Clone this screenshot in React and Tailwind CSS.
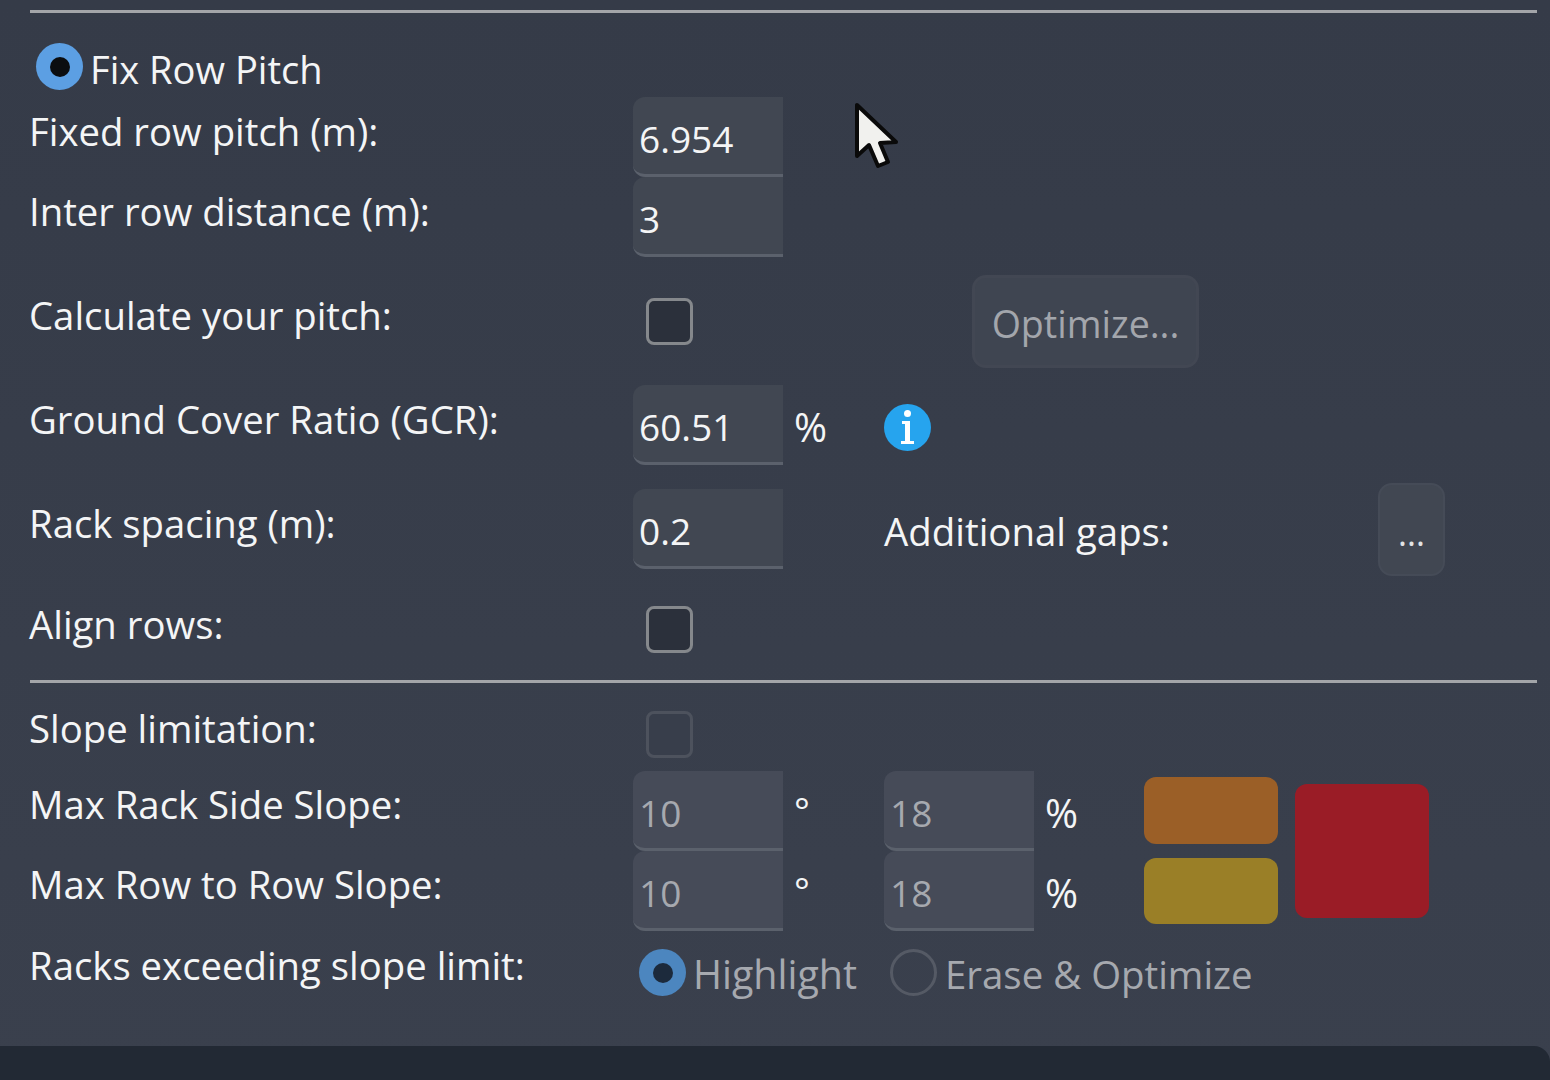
import { useState } from 'react'

function Label({ children, className = '' }) {
    return <div className={`-ml-[1px] w-[604px] shrink-0 text-[38.3px] text-[#f4f5f6] ${className}`}>{children}</div>
}

function Campo({ value, disabled = false }) {
    return (
        <div className={`flex h-[80px] w-[150px] shrink-0 items-center rounded-l-[12px] border-b-[3px] border-[#5b616c] pl-[6px] pt-[7px] ${disabled ? 'bg-[#464b58] text-[#a6a9af]' : 'bg-[#414752] text-[#f4f5f6]'}`}>
            {value}
        </div>
    )
}

function Check({ disabled = false }) {
    return (
        <div className={`ml-[13px] h-[47px] w-[47px] shrink-0 rounded-[8px] border-[3px] ${disabled ? 'border-[#4d525d] bg-[#383e4b]' : 'border-[#85888c] bg-[#2b303b]'}`} />
    )
}

function Radio({ checked, color = 'bg-[#5c9fe3]', dot = 'bg-[#0b0d10]', className = '' }) {
    if (!checked) {
        return <div className={`h-[47px] w-[47px] shrink-0 rounded-full border-[3px] border-[#555a65] ${className}`} />
    }
    return (
        <div className={`flex h-[47px] w-[47px] shrink-0 items-center justify-center rounded-full ${color} ${className}`}>
            <div className={`h-[20px] w-[20px] rounded-full ${dot}`} />
        </div>
    )
}

function Cursor() {
    return (
        <svg className="absolute left-[853px] top-[101px]" width="48" height="70" viewBox="0 0 48 70">
            <path d="M4 4 L4 55 L16 44 L25 65 L35 61 L27 42 L43 41 Z" fill="#f1f1ee" stroke="#0a0a0a" strokeWidth="4" strokeLinejoin="round" />
        </svg>
    )
}

function InfoIcon() {
    return (
        <svg className="ml-[57px] mt-[19px] shrink-0" width="47" height="47" viewBox="0 0 47 47">
            <circle cx="23.5" cy="23.5" r="23.5" fill="#26a4ee" />
            <circle cx="23.5" cy="9.5" r="3.5" fill="#ffffff" />
            <path d="M18 17 H26 V37 H30 V40 H17 V37 H21 V20 H18 Z" fill="#ffffff" />
        </svg>
    )
}

function Percent({ className = '' }) {
    return <span className={`ml-[11px] text-[40px] text-[#f4f5f6] ${className}`}>%</span>
}

function Grado() {
    return <span className="ml-[11px] mt-[14px] w-[90px] shrink-0 text-[#f4f5f6]">°</span>
}

export default function App() {
    useState(null)

    return (
        <div className="relative flex h-[1080px] w-[1550px] flex-col overflow-hidden bg-gradient-to-b from-[#353b48] to-[#3a404d] font-['Open_Sans',sans-serif] text-[37px] leading-[50px]">
            <div className="ml-[30px] mr-[13px] mt-[10px] h-[3px] shrink-0 bg-[#a3a5a9]" />

            <div className="ml-[36px] mt-[30px] flex h-[47px] items-center text-[38.1px] text-[#f4f5f6]">
                <Radio checked />
                <span className="ml-[7px] mt-[4px]">Fix Row Pitch</span>
            </div>

            <div className="ml-[30px] mt-[7px] flex h-[80px]">
                <Label className="mt-[9px]">Fixed row pitch (m):</Label>
                <Campo value="6.954" />
            </div>
            <div className="ml-[30px] flex h-[80px]">
                <Label className="mt-[9px]">Inter row distance (m):</Label>
                <Campo value="3" />
            </div>

            <div className="ml-[30px] mt-[18px] flex h-[93px]">
                <Label className="mt-[15px]">Calculate your pitch:</Label>
                <div className="mt-[23px]"><Check /></div>
                <button type="button" className="ml-[279px] h-[93px] w-[227px] rounded-[14px] border-[3px] border-[#424753] bg-[#3f4551] pt-[4px] text-[37.6px] text-[#a3a6ac]">
                    Optimize...
                </button>
            </div>

            <div className="ml-[30px] mt-[17px] flex h-[80px]">
                <Label className="mt-[9px]">Ground Cover Ratio (GCR):</Label>
                <Campo value="60.51" />
                <Percent className="mt-[17px]" />
                <InfoIcon />
            </div>

            <div className="ml-[30px] mt-[24px] flex h-[80px]">
                <Label className="mt-[9px]">Rack spacing (m):</Label>
                <Campo value="0.2" />
                <span className="ml-[101px] mt-[17px] w-[494px] shrink-0 text-[38.4px] text-[#f4f5f6]">Additional gaps:</span>
                <button type="button" className="-mt-[6px] h-[93px] w-[67px] rounded-[14px] border-[2px] border-[#454b57] bg-[#414752] pt-[6px] text-[34px] text-[#e2e3e5]">
                    ...
                </button>
            </div>

            <div className="ml-[30px] mt-[37px] flex h-[47px]">
                <Label className="-mt-[7px]">Align rows:</Label>
                <Check />
            </div>

            <div className="ml-[30px] mr-[13px] mt-[27px] h-[3px] shrink-0 bg-[#a3a5a9]" />

            <div className="ml-[30px] mt-[28px] flex h-[47px]">
                <Label className="-mt-[8px]">Slope limitation:</Label>
                <Check disabled />
            </div>

            <div className="ml-[30px] mt-[13px] flex h-[160px]">
                <div className="flex w-[1084px] shrink-0 flex-col">
                    <div className="flex h-[80px]">
                        <Label className="mt-[8px]">Max Rack Side Slope:</Label>
                        <Campo value="10" disabled />
                        <Grado />
                        <Campo value="18" disabled />
                        <Percent className="mt-[17px]" />
                    </div>
                    <div className="flex h-[80px]">
                        <Label className="mt-[8px]">Max Row to Row Slope:</Label>
                        <Campo value="10" disabled />
                        <Grado />
                        <Campo value="18" disabled />
                        <Percent className="mt-[17px]" />
                    </div>
                </div>
                <div className="ml-[30px] mt-[6px] flex w-[134px] shrink-0 flex-col gap-[14px]">
                    <div className="h-[67px] rounded-[12px] bg-[#9b5f27]" />
                    <div className="h-[66px] rounded-[12px] bg-[#9a7f27]" />
                </div>
                <div className="ml-[17px] mt-[13px] h-[134px] w-[134px] shrink-0 rounded-[12px] bg-[#9a1c26]" />
            </div>

            <div className="ml-[30px] mt-[18px] flex h-[47px]">
                <Label className="-mt-[9px] w-[610px]">Racks exceeding slope limit:</Label>
                <Radio checked color="bg-[#4c86bf]" dot="bg-[#1c2a3c]" />
                <span className="ml-[7px] mt-[0px] text-[39.4px] text-[#a6a9af]">Highlight</span>
                <Radio checked={false} className="ml-[33px]" />
                <span className="ml-[8px] mt-[0px] text-[38.4px] text-[#a6a9af]">Erase &amp; Optimize</span>
            </div>

            <div className="mt-[50px] flex-1 rounded-tr-[16px] bg-[#222934]" />

            <Cursor />
        </div>
    )
}
